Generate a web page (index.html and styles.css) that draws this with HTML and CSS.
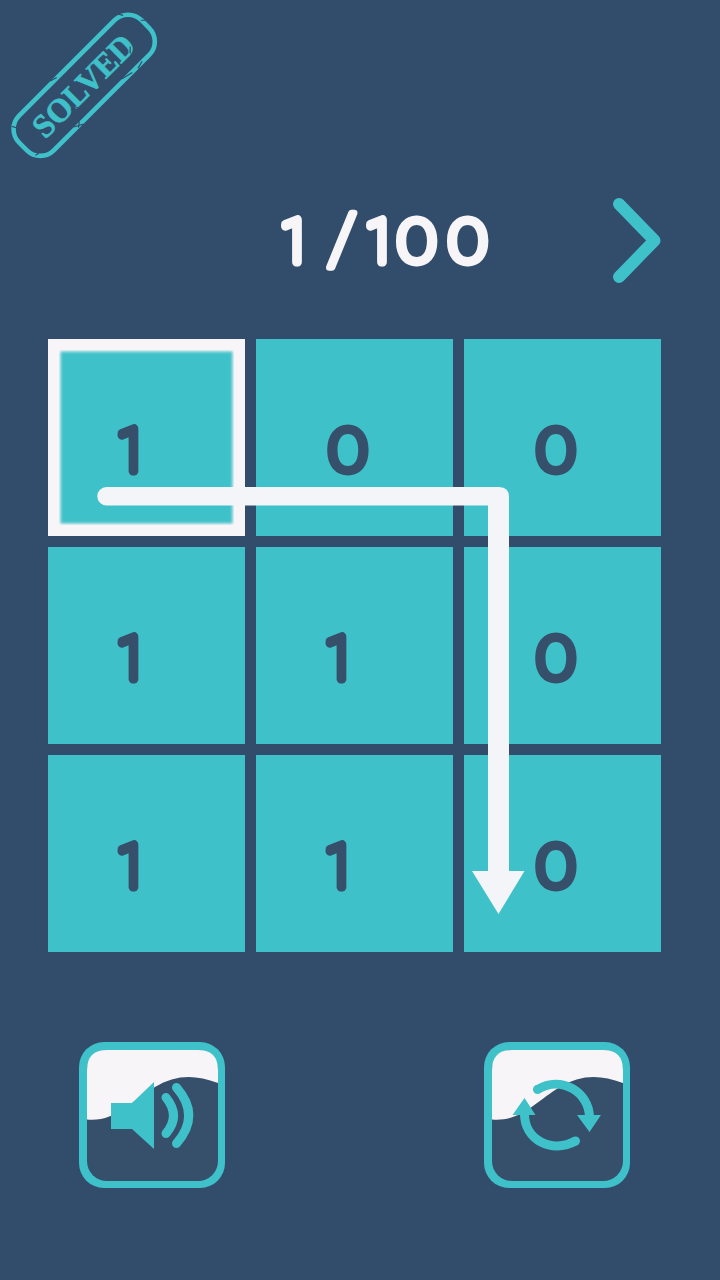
FILE: index.html
```
<!DOCTYPE html>
<html lang="en">
<head>
<meta charset="utf-8">
<title>Puzzle</title>
<link rel="stylesheet" href="styles.css">
</head>
<body>
<main class="game">
  <header class="top">
    <svg class="stamp" width="170" height="170" viewBox="0 0 170 170">
      <g transform="translate(84.2 85.3) rotate(-45)">
        <rect class="stamp-frame" x="-86.5" y="-24.5" width="173" height="49" rx="19"/>
        <text class="stamp-text" x="-66" y="11" textLength="130" lengthAdjust="spacingAndGlyphs">SOLVED</text>
        <path class="scratch" d="M74-27l3 5M86-6l3 3M31 22l12 3M50 26l8-2M-37 22l9 5M-34 26l5-4M-80-22l2 4M-21-27l7 2M-84 15l4 1M-27 8l7 3M55 10l5-5M8-10l2 3"/>
      </g>
    </svg>
  </header>

  <section class="level">
    <svg class="counter" width="240" height="100" viewBox="0 0 240 100">
      <g class="digit light">
        <text transform="translate(15.3 72) scale(.92 1)">1</text>
        <text class="slash" transform="translate(63 73) scale(1.07 1)">/</text>
        <text transform="translate(100.300 72) scale(.92 1)">1</text>
        <text class="zero" transform="translate(133 71.700) scale(1.08 1)">0</text>
        <text class="zero" transform="translate(184 71.700) scale(1.08 1)">0</text>
      </g>
    </svg>
    <svg class="next" width="70" height="100" viewBox="0 0 70 100"><path d="M19 14L54.5 50.5L19 87"/></svg>
  </section>

  <section class="board">
    <div class="cell selected"><svg viewBox="0 0 197 197"><text class="digit" transform="translate(68.8 132) scale(.92 1)">1</text></svg></div>
    <div class="cell"><svg viewBox="0 0 197 197"><text class="digit zero" transform="translate(73.3 131.700) scale(1.08 1)">0</text></svg></div>
    <div class="cell"><svg viewBox="0 0 197 197"><text class="digit zero" transform="translate(73.3 131.700) scale(1.08 1)">0</text></svg></div>
    <div class="cell"><svg viewBox="0 0 197 197"><text class="digit" transform="translate(68.8 132) scale(.92 1)">1</text></svg></div>
    <div class="cell"><svg viewBox="0 0 197 197"><text class="digit" transform="translate(68.8 132) scale(.92 1)">1</text></svg></div>
    <div class="cell"><svg viewBox="0 0 197 197"><text class="digit zero" transform="translate(73.3 131.700) scale(1.08 1)">0</text></svg></div>
    <div class="cell"><svg viewBox="0 0 197 197"><text class="digit" transform="translate(68.8 132) scale(.92 1)">1</text></svg></div>
    <div class="cell"><svg viewBox="0 0 197 197"><text class="digit" transform="translate(68.8 132) scale(.92 1)">1</text></svg></div>
    <div class="cell"><svg viewBox="0 0 197 197"><text class="digit zero" transform="translate(73.3 131.700) scale(1.08 1)">0</text></svg></div>
    <svg class="trail" viewBox="0 0 613 613">
      <path d="M58.5 148H451Q461 148 461 158V532H476.5L450.5 575L424 532H440V166.5H58.5A9.25 9.25 0 0 1 58.5 148Z"/>
    </svg>
  </section>

  <footer class="controls">
    <button class="control" aria-label="Sound">
      <svg viewBox="0 0 146 146">
        <rect class="teal" width="146" height="146" rx="25"/>
        <rect class="panel" x="8" y="8" width="131" height="131" rx="20"/>
        <path class="wave" d="M8 77.5V28Q8 8 28 8H119Q139 8 139 28V41C115 32 96 33 76 45C51 60 37 80 8 77.5Z"/>
        <path class="teal" d="M32 61H53L75 40V107L53 87H32Z"/>
        <path class="stroke" d="M87 55.500Q102 74 87 91.500M97.500 45.500Q122 73.500 97.500 101.500"/>
      </svg>
    </button>
    <button class="control" aria-label="Restart">
      <svg viewBox="0 0 146 146">
        <rect class="teal" width="146" height="146" rx="25"/>
        <rect class="panel" x="8" y="8" width="131" height="131" rx="20"/>
        <path class="wave" d="M8 77.500V28Q8 8 28 8H119Q139 8 139 28V41C115 32 96 33 76 45C51 60 37 80 8 77.500Z"/>
        <path class="stroke butt" d="M53.500 47.500C77 33 105 50 105.500 75M91.500 99C68 112 40 98 40.500 71"/>
        <circle class="teal" cx="53.500" cy="47.500" r="4.500"/><circle class="teal" cx="91.500" cy="99" r="4.500"/>
        <path class="teal" d="M93 73H117L105.500 90ZM28.500 73H51.500L40.500 56Z"/>
      </svg>
    </button>
  </footer>
</main>
</body>
</html>
```
FILE: styles.css
```
* { box-sizing: border-box; }
body { margin: 0; background: #324d6b; }
svg { display: block; }
.game { width: 720px; height: 1280px; overflow: hidden; background: #324d6b; }
.top { height: 190px; }
.stamp-frame { fill: none; stroke: #3fc1c9; stroke-width: 4.6; }
.stamp-text { font: bold 33px "Liberation Serif", serif; fill: #3fc1c9; stroke: #3fc1c9; stroke-width: .6; }
.scratch { fill: none; stroke: #324d6b; stroke-width: 1.2; }
.level { display: flex; height: 149px; padding-left: 265px; gap: 95px; }
.digit { font: 100 59px Roboto, sans-serif; fill: #364f6b; stroke: #364f6b; stroke-width: 9; stroke-linejoin: round; }
.zero { font: 100 59.5px Lato, sans-serif; stroke-width: 8.8; }
.light { fill: #f8f5f8; stroke: #f8f5f8; }
.slash { font-size: 70px; stroke-width: 6.6; }
.next path { fill: none; stroke: #3fc1c9; stroke-width: 12; stroke-linecap: round; stroke-linejoin: round; }
.board { position: relative; display: grid; grid-template-columns: repeat(3, 197px); grid-auto-rows: 197px; gap: 11px; width: 613px; margin-left: 48px; }
.cell { background: #3fc1c9; }
.selected { box-shadow: inset 0 0 0 11px #f8f5f8, inset 0 0 3px 12.5px #f8f5f8; }
.trail { position: absolute; inset: 0; }
.trail path { fill: #f4f5f8; }
.controls { display: flex; justify-content: space-between; padding: 90px 90px 0 79px; }
.control { width: 146px; height: 146px; padding: 0; border: 0; background: none; }
.teal { fill: #3fc1c9; }
.panel { fill: #364f6b; }
.wave { fill: #f8f5f8; }
.stroke { fill: none; stroke: #3fc1c9; stroke-width: 9; stroke-linecap: round; }
.butt { stroke-linecap: butt; }
```
